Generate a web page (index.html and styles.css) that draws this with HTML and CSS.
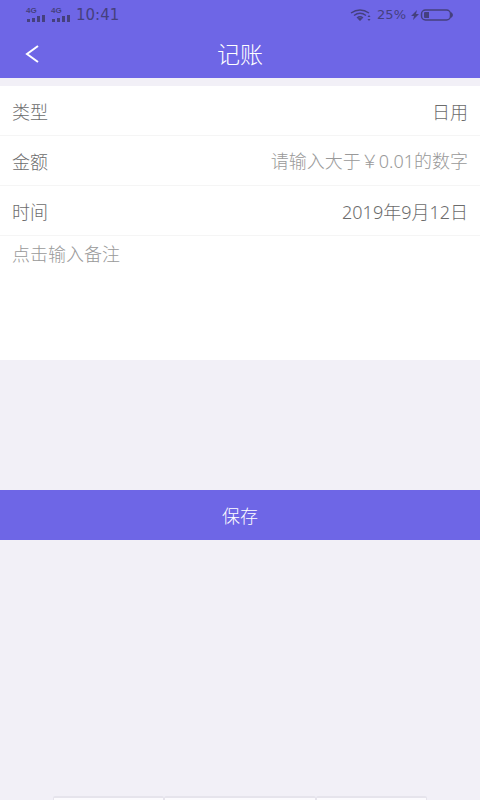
FILE: index.html
```html
<!DOCTYPE html>
<html lang="zh-CN">
<head>
<meta charset="utf-8">
<meta name="viewport" content="width=device-width, initial-scale=1">
<title>记账</title>
<link rel="stylesheet" href="styles.css">
</head>
<body>
<div class="app">
  <header class="top">
    <div class="status">
      <div class="status-group">
        <span class="signal">
          <span class="network">4G</span>
          <svg width="20" height="7" viewBox="0 0 20 7" aria-hidden="true"><path d="M1 4h3v3H1zM6 3h3v4H6zM11 1h3v6h-3zM16 0h3v7h-3z"/></svg>
        </span>
        <span class="signal">
          <span class="network">4G</span>
          <svg width="20" height="7" viewBox="0 0 20 7" aria-hidden="true"><path d="M1 4h3v3H1zM6 3h3v4H6zM11 1h3v6h-3zM16 0h3v7h-3z"/></svg>
        </span>
        <span class="clock">10:41</span>
      </div>
      <div class="status-group">
        <svg width="22" height="12" viewBox="0 0 22 12" aria-hidden="true"><g class="line"><path d="M1 4Q10-2 19 4M4 6.500Q10 2 16 6.500M7 9Q10 6.500 13 9"/></g><path d="M7.500 9.500q2.500-1.500 5 0L10 12zM19 6l1.500 2h-3zM19 12l-1.500-2h3z"/></svg>
        <span class="percent">25%</span>
        <svg class="battery" width="43" height="12" viewBox="0 0 43 12" aria-hidden="true"><path d="M6 1L0 7h3l-1 4 6-6H5zM14 3h4v6h-4q-1 0-1-1V4q0-1 1-1zM40 3q4 3 0 6z"/><rect class="line" x="10.500" y="1" width="29" height="10" rx="4"/></svg>
      </div>
    </div>
    <div class="titlebar">
      <button class="back" type="button" aria-label="返回"><svg width="14" height="18" viewBox="0 0 14 18" aria-hidden="true"><path d="M13 1L2 9l11 8"/></svg></button>
      <h1>记账</h1>
    </div>
  </header>
  <form class="form">
    <div class="row"><label for="kind">类型</label><input id="kind" type="text" value="日用" readonly></div>
    <div class="row"><label for="amount">金额</label><input id="amount" type="text" inputmode="decimal" placeholder="请输入大于￥0.01的数字"></div>
    <div class="row"><label for="date">时间</label><input id="date" type="text" value="2019年9月12日" readonly></div>
    <textarea class="note" aria-label="备注" placeholder="点击输入备注"></textarea>
    <button class="save" type="submit">保存</button>
  </form>
  <div class="tabs" aria-hidden="true"><span></span><span></span><span></span></div>
</div>
</body>
</html>
```
FILE: styles.css
```css
* {
  box-sizing: border-box;
}

body {
  margin: 0;
  background: #f2f0f7;
  color: #6c6c6c;
  font-family: "Noto Sans", "Noto Sans CJK SC", sans-serif;
  font-size: 18px;
  font-weight: 300;
}

button,
input,
textarea {
  margin: 0;
  padding: 0;
  border: 0;
  background: none;
  color: inherit;
  font: inherit;
}

.app {
  display: flex;
  flex-direction: column;
  min-height: 100vh;
}

.top {
  background: #6e66e6;
}

.status {
  display: flex;
  justify-content: space-between;
  align-items: center;
  height: 30px;
  padding: 0 26px;
  color: #45407e;
  fill: #45407e;
}

.status-group {
  display: flex;
  align-items: center;
  gap: 5px;
}

.signal {
  display: flex;
  flex-direction: column;
  gap: 1px;
}

.network {
  font: bold 8px/6px "Liberation Sans", sans-serif;
}

.clock {
  font: 15px/20px "DejaVu Sans", sans-serif;
}

.percent {
  font: 13px/20px "DejaVu Sans", sans-serif;
}

.line {
  fill: none;
  stroke: #45407e;
  stroke-width: 1.5;
}

.titlebar {
  display: grid;
  grid-template-columns: 64px 1fr 64px;
  align-items: center;
  height: 48px;
  color: #fff;
}

.titlebar h1 {
  margin: 0;
  font-size: 23px;
  line-height: 48px;
  font-weight: 300;
  text-align: center;
}

.back {
  display: flex;
  align-items: center;
  justify-content: center;
  height: 48px;
}

.back svg {
  fill: none;
  stroke: #fff;
  stroke-width: 2;
}

.form {
  display: flex;
  flex-direction: column;
  margin-top: 8px;
}

.row {
  display: flex;
  align-items: center;
  gap: 16px;
  min-height: 50px;
  padding: 0 12px;
  border-bottom: 1px solid #f5f5f5;
  background: #fff;
}

.row input {
  flex: 1;
  min-width: 0;
  height: 48px;
  text-align: right;
}

::placeholder {
  color: #999;
  opacity: 1;
}

.note {
  height: 124px;
  padding: 6px 12px;
  background: #fff;
  line-height: 24px;
  resize: none;
}

.save {
  height: 50px;
  margin-top: 130px;
  background: #6e66e6;
  color: #fff;
}

.tabs {
  display: grid;
  grid-template-columns: 110fr 152fr 110fr;
  width: 78%;
  height: 4px;
  margin: auto auto 0;
}

.tabs span {
  border: 1px solid #e6e4ec;
  border-top-width: 2px;
  border-bottom: 0;
  border-radius: 2px 2px 0 0;
  background: #fcfbfe;
}
```
